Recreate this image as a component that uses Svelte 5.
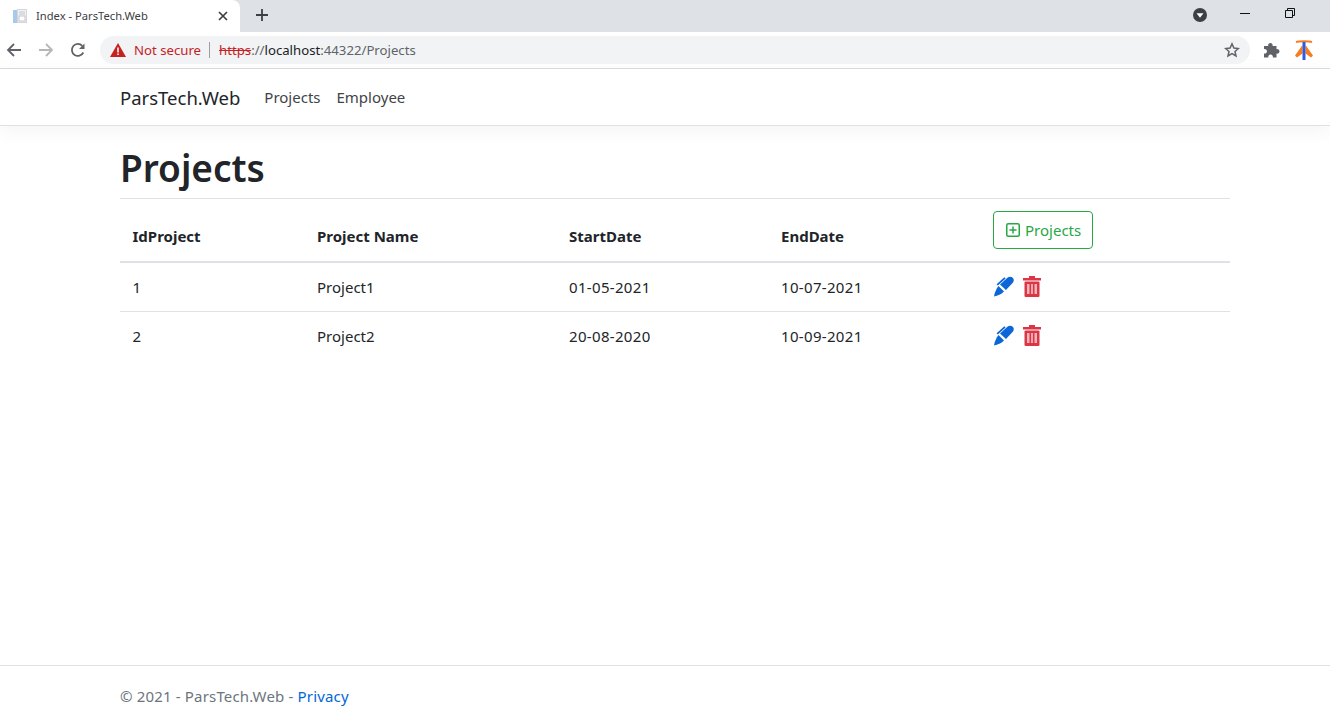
<script>
  const rows = [
    { id: 1, name: "Project1", start: "01-05-2021", end: "10-07-2021" },
    { id: 2, name: "Project2", start: "20-08-2020", end: "10-09-2021" },
  ];
</script>

<div class="browser">
  <div class="tabstrip">
    <div class="tab">
      <svg class="favicon" width="16" height="16" viewBox="0 0 16 16">
        <rect x="1" y="2" width="6" height="13" fill="#a9c9ec" />
        <rect x="5.500" y="1.500" width="9" height="13" fill="#f1f2f4" stroke="#d2d5d9" />
        <rect x="7" y="8" width="6" height="5" fill="#fff" stroke="#c4c7cb" />
        <path d="M7 4h6M7 6h6" stroke="#c4c7cb" />
      </svg>
      <span class="tab-title">Index - ParsTech.Web</span>
      <svg class="tab-close" width="10" height="10" viewBox="0 0 10 10">
        <path d="M1 1l8 8M9 1l-8 8" stroke="#3c4043" stroke-width="1.700" />
      </svg>
    </div>
    <svg class="new-tab" width="12" height="12" viewBox="0 0 12 12">
      <path d="M6 0v12M0 6h12" stroke="#3c4043" stroke-width="1.800" />
    </svg>
    <div class="spacer"></div>
    <svg class="profile-dot" width="14" height="14" viewBox="0 0 14 14">
      <circle cx="7" cy="7" r="7" fill="#3c4043" />
      <path d="M3.500 5.200h7L7 9.800z" fill="#fff" />
    </svg>
    <div class="win-btn">
      <svg width="10" height="10" viewBox="0 0 10 10"><path d="M0 5.500h10" stroke="#111" /></svg>
    </div>
    <div class="win-btn">
      <svg width="10" height="10" viewBox="0 0 10 10">
        <path d="M.5 2.500h7v7h-7zM2.500 2.500v-2h7v7h-2" fill="none" stroke="#111" />
      </svg>
    </div>
  </div>

  <div class="toolbar">
    <svg class="nav-icon" width="16" height="16" viewBox="0 0 16 16">
      <path d="M15 8H2M8 2L2 8l6 6" fill="none" stroke="#5f6368" stroke-width="1.800" />
    </svg>
    <svg class="nav-icon" width="16" height="16" viewBox="0 0 16 16">
      <path d="M1 8h13M8 2l6 6-6 6" fill="none" stroke="#b4b6b9" stroke-width="1.800" />
    </svg>
    <svg class="nav-icon" width="16" height="16" viewBox="0 0 16 16">
      <path d="M13.300 10.500A6 6 0 1 1 12.300 3.800" fill="none" stroke="#5f6368" stroke-width="1.800" />
      <path d="M14.500 1.500v5.500H9z" fill="#5f6368" />
    </svg>
    <div class="omnibox">
      <svg width="16" height="14" viewBox="0 0 16 14">
        <path d="M8 0l8 14H0z" fill="#c5221f" />
        <path d="M8 4.500v5M8 10.500v1.500" stroke="#fff" stroke-width="1.500" />
      </svg>
      <span class="not-secure">Not secure</span>
      <span class="omni-sep"></span>
      <span class="url"><span class="scheme">https</span><span class="url-dim">://</span><span class="url-host">localhost</span><span class="url-dim">:44322/Projects</span></span>
      <div class="spacer"></div>
      <svg width="16" height="16" viewBox="0 0 16 16">
        <path d="M8 1.800l1.900 4.200 4.500.5-3.400 3 1 4.500L8 11.700 4 14l1-4.500-3.400-3 4.500-.5z" fill="none" stroke="#5f6368" stroke-width="1.500" />
      </svg>
    </div>
    <svg class="puzzle" width="16" height="16" viewBox="0 0 16 16">
      <path d="M0 4h4.200a2.300 2.300 0 1 1 4.400 0H12.500v3.200a2.300 2.300 0 1 1 0 4.400V15.500H8.800a2.300 2.300 0 1 0-4.400 0H0v-4a2.300 2.300 0 1 0 0-4.400z" fill="#5f6368" />
    </svg>
    <svg class="ext" width="18" height="20" viewBox="0 0 18 20">
      <path d="M1 2c3-1 13-1 16 0" fill="none" stroke="#f57c1f" stroke-width="2" />
      <path d="M7.500 5L0 15.500l2 2 5.500-4zM10.500 5L18 15.500l-2 2-5.500-4z" fill="#f57c1f" />
      <rect x="7.500" y="2" width="3" height="18" fill="#2f5be0" />
    </svg>
  </div>
</div>

<header class="navbar">
  <div class="container nav-inner">
    <a class="brand" href="#top">ParsTech.Web</a>
    <a class="nav-link" href="#top">Projects</a>
    <a class="nav-link" href="#top">Employee</a>
  </div>
</header>

<main class="container">
  <h1>Projects</h1>
  <table>
    <thead>
      <tr>
        <th class="c-id">IdProject</th>
        <th class="c-name">Project Name</th>
        <th class="c-start">StartDate</th>
        <th class="c-end">EndDate</th>
        <th>
          <button class="btn-add">
            <svg width="14" height="14" viewBox="0 0 14 14">
              <rect x=".75" y=".75" width="12.500" height="12.500" rx="1.500" fill="none" stroke="#28a745" stroke-width="1.500" />
              <path d="M7 3.500v7M3.500 7h7" stroke="#28a745" stroke-width="1.500" />
            </svg>
            Projects
          </button>
        </th>
      </tr>
    </thead>
    <tbody>
      {#each rows as row}
        <tr>
          <td>{row.id}</td>
          <td>{row.name}</td>
          <td class="date">{row.start}</td>
          <td class="date">{row.end}</td>
          <td>
            <div class="actions">
              <svg width="22" height="22" viewBox="0 0 22 22">
                <path d="M1 21.500c.6-4 2.200-7.500 4.500-10.500l5.500 5.500C8 19.300 5 20.900 1 21.500z" fill="#0b66d8" />
                <path d="M7 9.400L14.700 2.500c1.800-1.300 3.800-1 5 .3 1.300 1.300 1.500 3 .3 4.700l-7 7.500z" fill="#0b66d8" />
                <path d="M4.200 9.800L12 2.800" stroke="#0b66d8" stroke-width="1.800" />
              </svg>
              <svg width="18" height="21" viewBox="0 0 18 21">
                <path d="M6 0h6v2h6v2.500H0V2h6z" fill="#dc3545" />
                <rect x="1.500" y="5.500" width="15" height="15.500" rx="1" fill="#dc3545" />
                <rect x="4" y="8" width="10" height="10" fill="#f5b5bb" />
                <path d="M7.300 8v10M10.700 8v10" stroke="#dc3545" stroke-width="1.600" />
              </svg>
            </div>
          </td>
        </tr>
      {/each}
    </tbody>
  </table>
</main>

<footer class="footer">
  <div class="container">© 2021 - ParsTech.Web - <a href="#top">Privacy</a></div>
</footer>

<style>
  :global(body) {
    margin: 0;
    background: #fff;
    font-family: "Noto Sans", "Open Sans", sans-serif;
    color: #212529;
    font-size: 15px;
    height: 717px;
    overflow: hidden;
  }

  /* browser chrome */
  .browser {
    font-family: "Noto Sans", sans-serif;
  }

  .tabstrip {
    display: flex;
    align-items: center;
    height: 32px;
    padding-right: 18px;
    background: #dee1e6;
  }

  .tab {
    display: flex;
    align-items: center;
    width: 240px;
    height: 32px;
    box-sizing: border-box;
    padding: 0 12px 0 12px;
    background: #fff;
    border-radius: 0 8px 0 0;
  }

  .tab-title {
    margin: 0 0 2px 8px;
    font-size: 11.200px;
    color: #3c4043;
  }

  .tab-close {
    margin: 0 0 1px auto;
  }

  .new-tab {
    margin: 0 0 2px 16px;
  }

  .spacer {
    flex: 1;
  }

  .profile-dot {
    margin-right: 15px;
    margin-bottom: 2px;
  }

  .win-btn {
    display: flex;
    justify-content: center;
    width: 45px;
    margin-top: -7px;
  }

  .toolbar {
    display: flex;
    align-items: center;
    height: 36px;
    border-bottom: 1px solid #dadce0;
    padding-left: 6px;
  }

  .nav-icon {
    margin-right: 16px;
  }

  .omnibox {
    display: flex;
    align-items: center;
    width: 1150px;
    height: 28px;
    box-sizing: border-box;
    margin-left: -2px;
    padding: 0 10px;
    background: #f1f3f4;
    border-radius: 14px;
    font-size: 13.200px;
  }

  .not-secure {
    margin-left: 8px;
    color: #c5221f;
  }

  .omni-sep {
    width: 1px;
    height: 16px;
    margin: 0 9px 0 8px;
    background: #9aa0a6;
  }

  .url-dim {
    color: #5f6368;
  }

  .url-host {
    color: #202124;
  }

  .scheme {
    color: #c5221f;
    text-decoration: line-through;
  }

  .puzzle {
    margin-left: 14px;
  }

  .ext {
    margin-left: 15px;
  }

  /* page */
  .container {
    box-sizing: border-box;
    width: 1110px;
    margin: 0 auto 0 120px;
  }

  .navbar {
    height: 56px;
    border-bottom: 1px solid #dee2e6;
    box-shadow: 0 4px 20px rgba(0, 0, 0, 0.05);
  }

  .nav-inner {
    display: flex;
    align-items: center;
    height: 100%;
  }

  .brand {
    margin-right: 24px;
    font-size: 18.500px;
    color: #212529;
    text-decoration: none;
  }

  .nav-link {
    margin-right: 16px;
    color: #3f4448;
    text-decoration: none;
  }

  h1 {
    margin: 0;
    height: 72px;
    border-bottom: 1px solid #dee2e6;
    font-size: 37px;
    font-weight: 600;
    line-height: 84px;
  }

  table {
    width: 100%;
    border-collapse: collapse;
    table-layout: fixed;
  }

  th {
    height: 62px;
    box-sizing: border-box;
    padding: 12px 12px 0 12.500px;
    border-bottom: 2px solid #dee2e6;
    text-align: left;
    font-weight: 700;
  }

  td {
    height: 48px;
    padding: 0 12px 0 12.500px;
    border-bottom: 1px solid #dee2e6;
  }

  tbody tr:last-child td {
    border-bottom: none;
  }

  .date {
    letter-spacing: 0.33px;
  }

  .c-id { width: 184.500px; }
  .c-name { width: 252px; }
  .c-start { width: 212px; }
  .c-end { width: 212px; }

  .btn-add {
    display: inline-flex;
    align-items: center;
    gap: 5px;
    height: 38px;
    padding: 0 11px 0 12px;
    margin-bottom: 12px;
    background: #fff;
    border: 1px solid #28a745;
    border-radius: 4px;
    color: #28a745;
    font: inherit;
    font-weight: 400;
  }

  .actions {
    display: flex;
    align-items: center;
    gap: 8px;
    padding-bottom: 2px;
  }

  .footer {
    position: absolute;
    top: 665px;
    left: 0;
    right: 0;
    height: 51px;
    line-height: 60px;
    letter-spacing: 0.17px;
    border-top: 1px solid #dee2e6;
    color: #6c757d;
  }

  .footer a {
    color: #0366d6;
    text-decoration: none;
  }
</style>
